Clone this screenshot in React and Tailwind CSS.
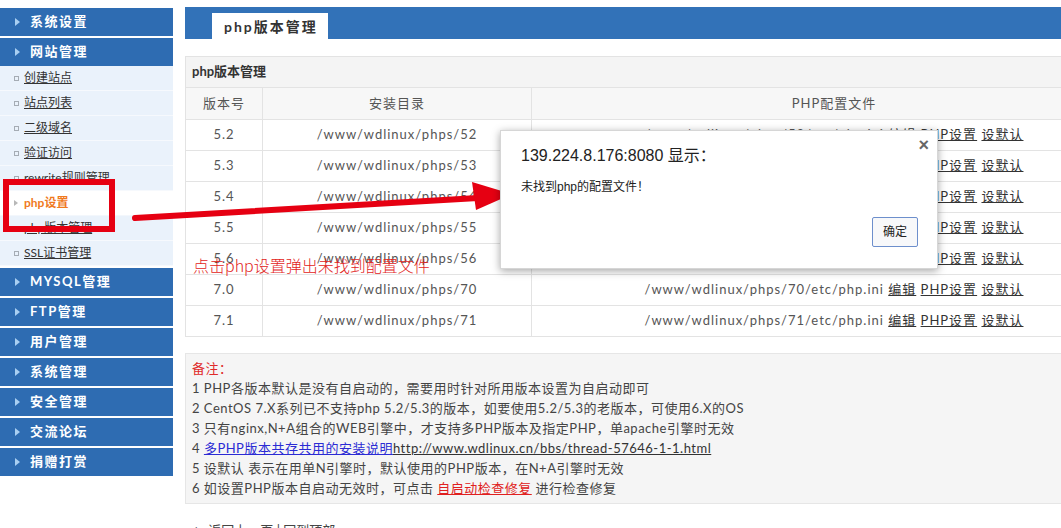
import React from 'react';

const siteLinks = ['创建站点', '站点列表', '二级域名', '验证访问', 'rewrite规则管理', 'php设置', 'php版本管理', 'SSL证书管理'];
const lowerMenus = ['MYSQL管理', 'FTP管理', '用户管理', '系统管理', '安全管理', '交流论坛', '捐赠打赏'];
const versions = [
  { v: '5.2', dir: '52' },
  { v: '5.3', dir: '53' },
  { v: '5.4', dir: '54' },
  { v: '5.5', dir: '55' },
  { v: '5.6', dir: '56' },
  { v: '7.0', dir: '70' },
  { v: '7.1', dir: '71' },
];

function NavHead({ label, last }) {
  return (
    <div
      className={
        'h-[28px] bg-[#2e6cb2] flex items-center pl-[15px] text-white font-bold text-[13px] tracking-[1.5px] ' +
        (last ? '' : 'mb-[2px]')
      }
    >
      <span className="w-0 h-0 border-y-[4px] border-y-transparent border-l-[5px] border-l-[#a9cff2] mr-[10px]" />
      {label}
    </div>
  );
}

function NavLink({ label, active }) {
  if (active) {
    return (
      <div className="h-[25px] bg-white border-b border-[#f3f7fc] flex items-center pl-[14px]">
        <span className="w-0 h-0 border-y-[3px] border-y-transparent border-l-[4px] border-l-[#b8b8b8] mr-[6px]" />
        <span className="text-[12px] font-bold text-[#f07a1e]">{label}</span>
      </div>
    );
  }
  return (
    <div className="h-[25px] bg-[#eaf2fb] border-b border-[#f6f9fd] flex items-center pl-[14px]">
      <span className="w-[5px] h-[5px] border border-[#a5acb4] mr-[5px]" />
      <span className="text-[12px] text-[#333] underline">{label}</span>
    </div>
  );
}

function Sidebar() {
  return (
    <aside className="w-[173px] shrink-0 pt-[8px]">
      <NavHead label="系统设置" />
      <NavHead label="网站管理" last />
      <div className="mb-[2px]">
        {siteLinks.map((s) => (
          <NavLink key={s} label={s} active={s === 'php设置'} />
        ))}
      </div>
      {lowerMenus.map((m) => (
        <NavHead key={m} label={m} />
      ))}
    </aside>
  );
}

function VersionTable() {
  return (
    <div className="w-[952px]">
      <div className="h-[32px] border border-[#e3e3e3] bg-[#f4f4f4] flex items-center pl-[6px] text-[13px] font-bold text-[#333]">
        php版本管理
      </div>
      <table className="w-full border-collapse text-[13px] tracking-[1px] text-[#555]">
        <colgroup>
          <col className="w-[77px]" />
          <col className="w-[269px]" />
          <col />
        </colgroup>
        <thead>
          <tr className="h-[31px] bg-[#f7f7f7]">
            <th className="border border-t-0 border-[#e3e3e3] font-normal">版本号</th>
            <th className="border border-t-0 border-[#e3e3e3] font-normal">安装目录</th>
            <th className="border border-t-0 border-[#e3e3e3] font-normal">PHP配置文件</th>
          </tr>
        </thead>
        <tbody>
          {versions.map((r) => (
            <tr key={r.v} className="h-[31px]">
              <td className="border border-[#e3e3e3] text-center">{r.v}</td>
              <td className="border border-[#e3e3e3] text-center">/www/wdlinux/phps/{r.dir}</td>
              <td className="border border-[#e3e3e3] text-center whitespace-nowrap">
                /www/wdlinux/phps/{r.dir}/etc/php.ini{' '}
                <a className="underline text-[#333]">编辑</a>{' '}
                <a className="underline text-[#333]">PHP设置</a>{' '}
                <a className="underline text-[#333]">设默认</a>
              </td>
            </tr>
          ))}
        </tbody>
      </table>
    </div>
  );
}

function Notes() {
  return (
    <div className="w-[952px] mt-[16px] h-[151px] border border-[#e6e6e6] bg-[#f5f5f5] pt-[4px] pl-[6px] text-[13px] tracking-[0.5px] leading-[20px] text-[#444] whitespace-nowrap">
      <div className="text-[#e02a2a]">备注：</div>
      <div>1 PHP各版本默认是没有自启动的，需要用时针对所用版本设置为自启动即可</div>
      <div>2 CentOS 7.X系列已不支持php 5.2/5.3的版本，如要使用5.2/5.3的老版本，可使用6.X的OS</div>
      <div>3 只有nginx,N+A组合的WEB引擎中，才支持多PHP版本及指定PHP，单apache引擎时无效</div>
      <div>
        4 <a className="underline text-[#2b2bd4]">多PHP版本共存共用的安装说明</a>
        <a className="underline text-[#333]">http://www.wdlinux.cn/bbs/thread-57646-1-1.html</a>
      </div>
      <div>5 设默认 表示在用单N引擎时，默认使用的PHP版本，在N+A引擎时无效</div>
      <div>
        6 如设置PHP版本自启动无效时，可点击 <a className="underline text-[#e02020]">自启动检查修复</a> 进行检查修复
      </div>
    </div>
  );
}

function AlertDialog() {
  return (
    <div className="absolute left-[500px] top-[130px] w-[438px] h-[139px] bg-white border border-[#d6d6d6] shadow-[0_2px_8px_rgba(0,0,0,0.35)] font-['Liberation_Sans','Noto_Sans_CJK_SC',sans-serif]">
      <span className="absolute right-[8px] top-[5px] text-[18px] leading-none text-[#666] font-bold">×</span>
      <div className="absolute left-[20px] top-[13px] text-[16px] text-[#222]">139.224.8.176:8080 显示：</div>
      <div className="absolute left-[20px] top-[47px] text-[12px] text-[#222]">未找到php的配置文件！</div>
      <button className="absolute left-[371px] top-[86px] w-[46px] h-[30px] border border-[#6d8fcc] rounded-[2px] bg-[#f7f8fa] text-[12px] text-[#222]">
        确定
      </button>
    </div>
  );
}

export default function App() {
  return (
    <div className="relative w-[1061px] h-[528px] overflow-hidden bg-white flex font-['Lato','Noto_Sans_CJK_SC',sans-serif]">
      <Sidebar />
      <main className="ml-[12px] pt-[7px] min-w-0 flex-1">
        <div className="h-[32px] bg-[#3272b8] pl-[27px] pt-[6px] w-[952px]">
          <div className="h-[26px] w-[116px] bg-white flex items-center pl-[12px] text-[14px] font-bold tracking-[2px] text-[#333]">
            php版本管理
          </div>
        </div>
        <div className="mt-[17px]">
          <VersionTable />
        </div>
        <Notes />
        <div className="mt-[17px] pl-[7px] text-[13px] text-[#444]">← 返回上一页 | 回到顶部</div>
      </main>

      {/* annotation overlay */}
      <div className="absolute left-[3px] top-[179px] w-[112px] h-[53px] border-[6px] border-[#e60012]" />
      <svg className="absolute inset-0 pointer-events-none" width="1061" height="528">
        <line x1="135" y1="218" x2="478" y2="198" stroke="#e60012" strokeWidth="6" strokeLinecap="round" />
        <polygon points="512,194 472,182 476,210" fill="#e60012" />
      </svg>
      <div className="absolute left-[193px] top-[253px] text-[16px] font-light text-[#e2231a] font-['Noto_Sans_CJK_SC',sans-serif]">
        点击php设置弹出未找到配置文件
      </div>
      <AlertDialog />
    </div>
  );
}
